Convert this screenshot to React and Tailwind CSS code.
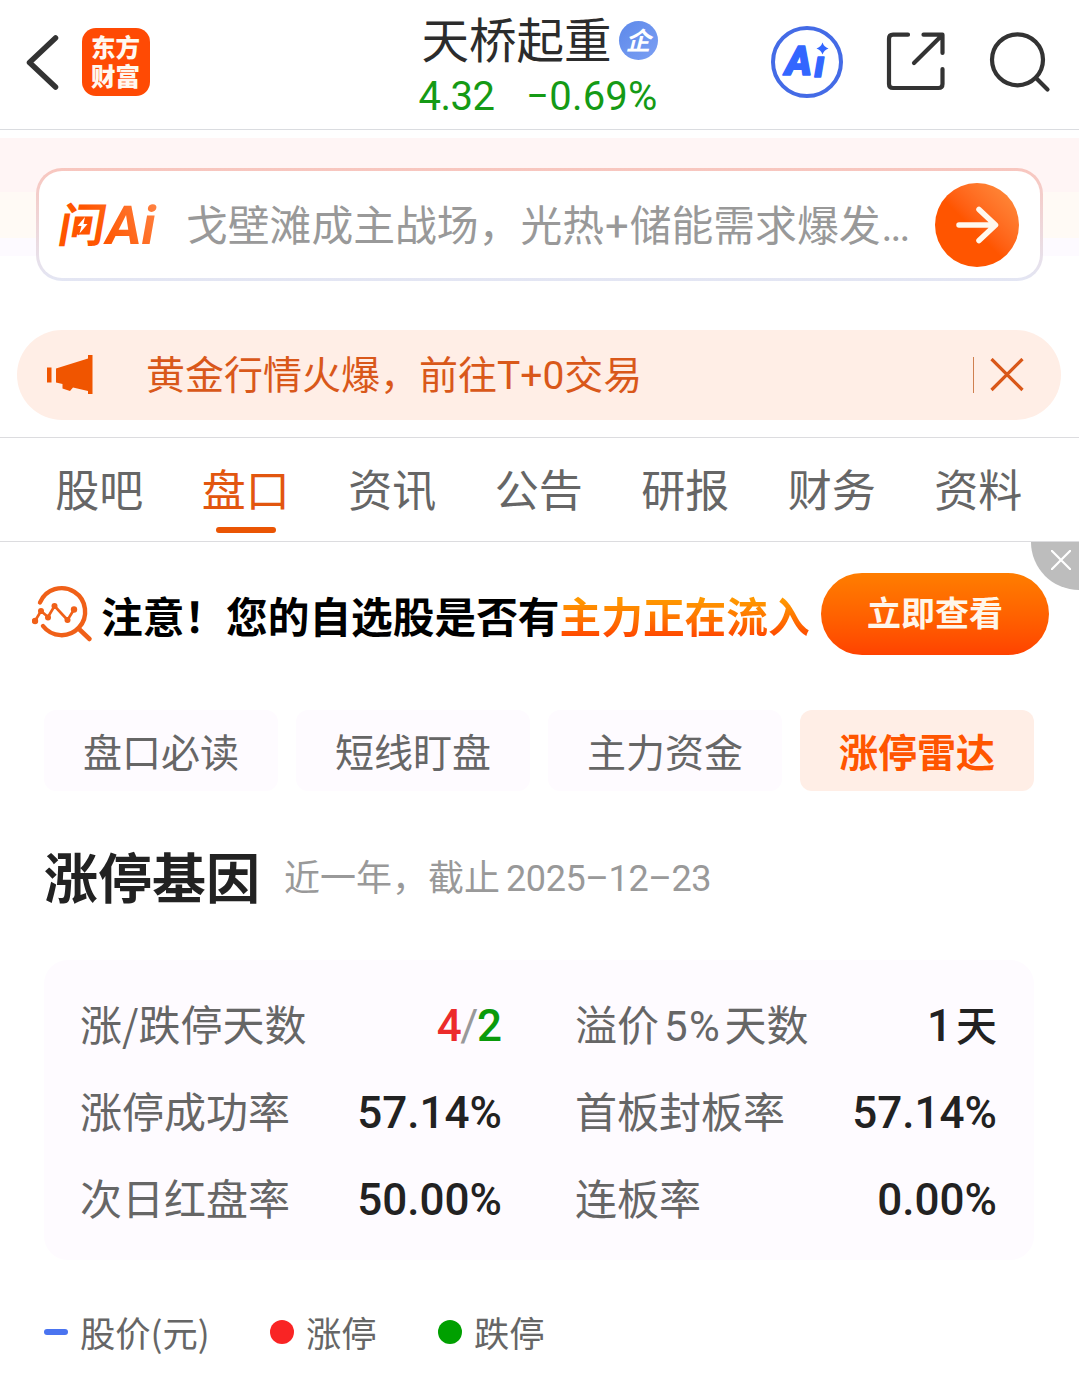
import clsx from 'clsx'

const tabs = ['股吧', '盘口', '资讯', '公告', '研报', '财务', '资料']
const chips = ['盘口必读', '短线盯盘', '主力资金', '涨停雷达']

/* Latin digits use a narrower face than the Chinese text */
function Num({ children, className = '' }) {
  return <span className={clsx("font-['Roboto',sans-serif]", className)}>{children}</span>
}

function Header() {
  return (
    <header className="flex h-[130px] items-start border-b border-[#dadce0] pl-[22px]">
      <div className="flex w-[386px] items-center pt-7">
        <svg className="h-[68px] w-[40px]" viewBox="22 28 40 68" fill="none" stroke="#333" strokeWidth="5.5">
          <path d="M55.5 38 29.5 62.5l26 24.500" strokeLinejoin="round" strokeLinecap="round" />
        </svg>
        <div className="ml-5 flex h-[68px] w-[68px] justify-center rounded-[14px] bg-[#ff4a04] pt-[4px]">
          <p className="w-[50px] break-all text-[24.5px] font-black leading-[29px] text-[#fff8f0]">东方财富</p>
        </div>
      </div>

      <div className="flex w-[260px] flex-col items-center pt-[8px]">
        <div className="flex items-center gap-[7px] pl-[3px]">
          <h1 className="whitespace-nowrap text-[47.5px] leading-[60px] text-[#2c2c2c]">天桥起重</h1>
          <span className="mt-[5px] flex h-[39px] w-[39px] items-center justify-center rounded-full bg-linear-to-br from-[#5d89ea] to-[#7c9ff3] pb-[2px] text-[25px] font-bold italic leading-none text-white">
            企
          </span>
        </div>
        <div className="flex w-[239px] justify-between whitespace-nowrap text-[40px] leading-[58px] text-[#159a15]">
          <Num className="tracking-[-0.5px]">4.32</Num>
          <Num className="tracking-[0.2px]">−0.69%</Num>
        </div>
      </div>

      <div className="ml-[103px] flex items-center pt-[26px]">
        <svg className="h-[72px] w-[72px]" viewBox="771.5 26 72 72">
          <defs>
            <clipPath id="stem">
              <rect x="810" y="56" width="24" height="24" />
            </clipPath>
          </defs>
          <circle cx="807.5" cy="62" r="34" fill="none" stroke="#446be6" strokeWidth="4" />
          <g fill="#3366ff" stroke="#3366ff" strokeWidth="1.400" strokeLinejoin="round" fontFamily="Roboto, sans-serif" fontWeight="900" fontStyle="italic">
            <text x="785.500" y="74.500" fontSize="41">A</text>
            <text x="815" y="76.500" fontSize="37" clipPath="url(#stem)">i</text>
          </g>
          <path d="M823 42.500q1.500 4.500 6 6-4.500 1.500-6 6-1.500-4.500-6-6 4.500-1.500 6-6z" fill="#3366ff" />
        </svg>
        <svg className="ml-[43px] h-[60px] w-[60px]" viewBox="886 33 60 60" fill="none" stroke="#333" strokeWidth="4.2" strokeLinecap="round" strokeLinejoin="round">
          <path d="M908 35.700h-15q-4 0-4 4V85q0 4 4 4h45.500q4 0 4-4V70" />
          <path d="M923.500 35.700h19V54M942 36.200 914 64" />
        </svg>
        <svg className="ml-[42px] h-[62px] w-[64px]" viewBox="988 31 64 62" fill="none" stroke="#333" strokeWidth="4.200" strokeLinecap="round">
          <circle cx="1017.500" cy="59.800" r="25.500" />
          <path d="m1036 78 11.500 11.500" />
        </svg>
      </div>
    </header>
  )
}

function AskLogo() {
  return (
    <svg className="h-[66px] w-[118px] shrink-0 overflow-visible" viewBox="49 192 118 66">
      <defs>
        <linearGradient id="ask" gradientUnits="userSpaceOnUse" x1="105" y1="245" x2="158" y2="205">
          <stop offset="0" stopColor="#ff5500" />
          <stop offset="1" stopColor="#ff8648" />
        </linearGradient>
      </defs>
      <g fill="url(#ask)" transform="translate(43 0) skewX(-10)">
        <text x="56" y="242" fontSize="47" fontWeight="700" fontFamily="Noto Sans CJK SC, sans-serif">问</text>
        <text x="103" y="244" fontSize="54" fontWeight="700" fontFamily="Roboto, sans-serif" textLength="50" lengthAdjust="spacingAndGlyphs">Ai</text>
      </g>
      <path d="M76 217h13l-2.500 15H82l-4 3.500.5-3.500H74z" fill="#ff5500" />
      <path d="m85 217-7.500 9h4l-2 7.500 8-9.500h-4z" fill="#fff" />
    </svg>
  )
}

function AskBar() {
  return (
    <section className="mt-2 h-[192px] bg-[linear-gradient(#fff5f5_0,#fff5f5_54px,#fffaf5_54px,#fffaf5_100px,#fdfaff_100px,#fdfaff_118px,#fff_118px)] px-9 pt-[30px]">
      <div className="h-[113px] w-[1007px] rounded-[26px] bg-linear-to-b from-[#f8c6be] to-[#e3e6f4] p-[3px]">
        <div className="flex h-full items-center rounded-[23px] bg-white pl-[10px] pr-[21px]">
          <AskLogo />
          <p className="ml-[19px] flex-1 whitespace-nowrap text-[41.800px] leading-[60px] text-[#999]">
            戈壁滩成主战场，光热<Num className="mx-[1px]">+</Num>储能需求爆发<Num className="ml-[1px] tracking-[-2px]">...</Num>
          </p>
          <button className="flex h-[84px] w-[84px] shrink-0 items-center justify-center rounded-full bg-linear-to-tr from-[#ff5500] from-45% to-[#ff9140]">
            <svg className="h-[42px] w-[46px]" viewBox="954 204 46 42" fill="none" stroke="#fff8ee" strokeWidth="5.500" strokeLinecap="round" strokeLinejoin="round">
              <path d="M959 225h36M979 209.500 995.500 225 979 240.500" />
            </svg>
          </button>
        </div>
      </div>
    </section>
  )
}

function Notice() {
  return (
    <div className="ml-[17px] flex h-[90px] w-[1044px] items-center rounded-full bg-[#ffeee6] pl-[29px] text-[#d9581a]">
      <svg className="h-[42px] w-[48px]" viewBox="46 354 48 42" fill="#f05500">
        <path d="M47 367.500h4.500v15H47zM56 368.500l32-10V355h4.500v39H88v-3l-15-3.500-3 3.500-7.500-2.500V384l-6.500-1.500z" />
      </svg>
      <p className="ml-[52px] flex-1 whitespace-nowrap pb-[3px] text-[39px] leading-[56px]">
        黄金行情火爆，前往<Num>T+0</Num>交易
      </p>
      <span className="h-9 w-px bg-[#cf8050]" />
      <svg className="ml-4 mr-[37px] h-[34px] w-[34px]" viewBox="0 0 34 34" fill="none" stroke="currentColor" strokeWidth="3.200">
        <path d="m1.500 1 31 31M32.500 1l-31 31" />
      </svg>
    </div>
  )
}

function Tabs() {
  return (
    <nav className="mt-[17px] flex h-[105px] border-y border-[#dcdcdf] px-[26px]">
      {tabs.map((tab, i) => (
        <div
          key={tab}
          className={clsx(
            'flex w-[146.500px] flex-col items-center pt-[18px] text-[44px] leading-[64px]',
            i === 1 ? 'text-[#e2560f]' : 'text-[#666]'
          )}
        >
          {tab}
          {i === 1 && <span className="mt-[7px] h-[6px] w-[60px] rounded-full bg-[#ea5504]" />}
        </div>
      ))}
    </nav>
  )
}

function Promo() {
  return (
    <section className="relative flex h-[168px] items-start pl-8 pt-[31px]">
      <svg className="mt-[10px] h-[60px] w-[62px]" viewBox="32 583 62 60" fill="none" stroke="#f06018" strokeLinecap="round" strokeLinejoin="round">
        <path d="M40 602.500a23.500 23.500 0 1 1 3 23.500" strokeWidth="4.400" />
        <path d="m79 629 10.500 10" strokeWidth="4.500" />
        <path d="m35 621 6-10 7 6 6.500-11L67.500 620l6.500-10.500" strokeWidth="2.600" />
        <g fill="#f06018" stroke="none">
          <circle cx="35" cy="621" r="3.200" />
          <circle cx="41" cy="611" r="3" />
          <circle cx="48" cy="617.500" r="3" />
          <circle cx="54.500" cy="606" r="3" />
          <circle cx="67.500" cy="620" r="3" />
          <circle cx="74" cy="609.500" r="3.200" />
        </g>
      </svg>
      <p className="ml-[7px] mt-[12px] w-[720px] whitespace-nowrap text-[41.700px] font-bold leading-[60px] text-black">
        注意！您的自选股是否有
        <span className="bg-linear-to-b from-[#ff9800] from-25% to-[#ff4800] to-85% bg-clip-text text-transparent">主力正在流入</span>
      </p>
      <button className="h-[82px] w-[228px] rounded-full bg-linear-to-b from-[#ff7d00] to-[#ff4200] pb-[4px] text-[34px] font-bold leading-none text-[#fff6ea]">
        立即查看
      </button>
      <button className="absolute right-0 top-0 h-12 w-12 rounded-bl-full bg-[#bdbdbd]">
        <svg className="ml-5 -mt-3 h-5 w-5" viewBox="0 0 20 20" stroke="#fff" strokeWidth="2.200">
          <path d="m0 0 20 20M20 0 0 20" />
        </svg>
      </button>
    </section>
  )
}

function Chips() {
  return (
    <div className="flex gap-[18px] pl-11">
      {chips.map((chip, i) => (
        <button
          key={chip}
          className={clsx(
            'h-[81px] w-[234px] rounded-xl text-[39px] leading-none',
            i === 3 ? 'bg-[#ffeee6] font-bold text-[#ff5500]' : 'bg-[#fefbff] text-[#666]'
          )}
        >
          {chip}
        </button>
      ))}
    </div>
  )
}

function Stat({ label, children }) {
  return (
    <div className="flex h-[87px] items-center justify-between whitespace-nowrap text-[42px] leading-[60px] text-[#666]">
      <span className="-ml-px h-[62px]">{label}</span>
      <span className="h-[63px] text-[44px] font-medium text-[#222]">{children}</span>
    </div>
  )
}

function Gene() {
  return (
    <section className="px-11 pt-[43px]">
      <div className="flex items-center">
        <h2 className="text-[54px] font-bold leading-[84px] text-[#222]">涨停基因</h2>
        <p className="ml-[24px] whitespace-nowrap pt-[1px] text-[36px] leading-[60px] text-[#999]">
          近一年，截止<Num className="ml-[6px] tracking-[-0.400px]">2025–12–23</Num>
        </p>
      </div>
      <div className="mt-[42px] grid h-[300px] w-[990px] grid-cols-2 content-start gap-x-[74px] rounded-3xl bg-[#fefbff] px-[37px] pt-[20px]">
        <Stat label="涨/跌停天数">
          <Num className="text-[#ec2b2b]">4</Num>
          <Num className="mx-[-1.500px] font-normal text-[#999]">/</Num>
          <Num className="text-[#0a9a0a]">2</Num>
        </Stat>
        <Stat label={<>溢价<Num className="ml-[5px] mr-[3px] tracking-[1.500px]">5%</Num>天数</>}>
          <Num>1</Num><span className="ml-[4px] text-[41px]">天</span>
        </Stat>
        <Stat label="涨停成功率"><Num>57.14%</Num></Stat>
        <Stat label="首板封板率"><Num>57.14%</Num></Stat>
        <Stat label="次日红盘率"><Num>50.00%</Num></Stat>
        <Stat label="连板率"><Num>0.00%</Num></Stat>
      </div>
    </section>
  )
}

function Legend() {
  return (
    <div className="mt-[43px] flex h-[58px] items-center whitespace-nowrap pl-11 text-[35.300px] leading-[60px] text-[#666]">
      <span className="h-[6px] w-6 rounded-full bg-[#4a74f0]" />
      <span className="ml-[12px] w-[190px]">股价(元)</span>
      <span className="h-6 w-6 rounded-full bg-[#f92424]" />
      <span className="ml-[12px] w-[132px]">涨停</span>
      <span className="h-6 w-6 rounded-full bg-[#00a000]" />
      <span className="ml-[12px]">跌停</span>
    </div>
  )
}

export default function App() {
  return (
    <div className="h-[1380px] w-[1079px] overflow-hidden bg-white font-['Noto_Sans_CJK_SC',sans-serif]">
      <Header />
      <AskBar />
      <Notice />
      <Tabs />
      <Promo />
      <Chips />
      <Gene />
      <Legend />
    </div>
  )
}
